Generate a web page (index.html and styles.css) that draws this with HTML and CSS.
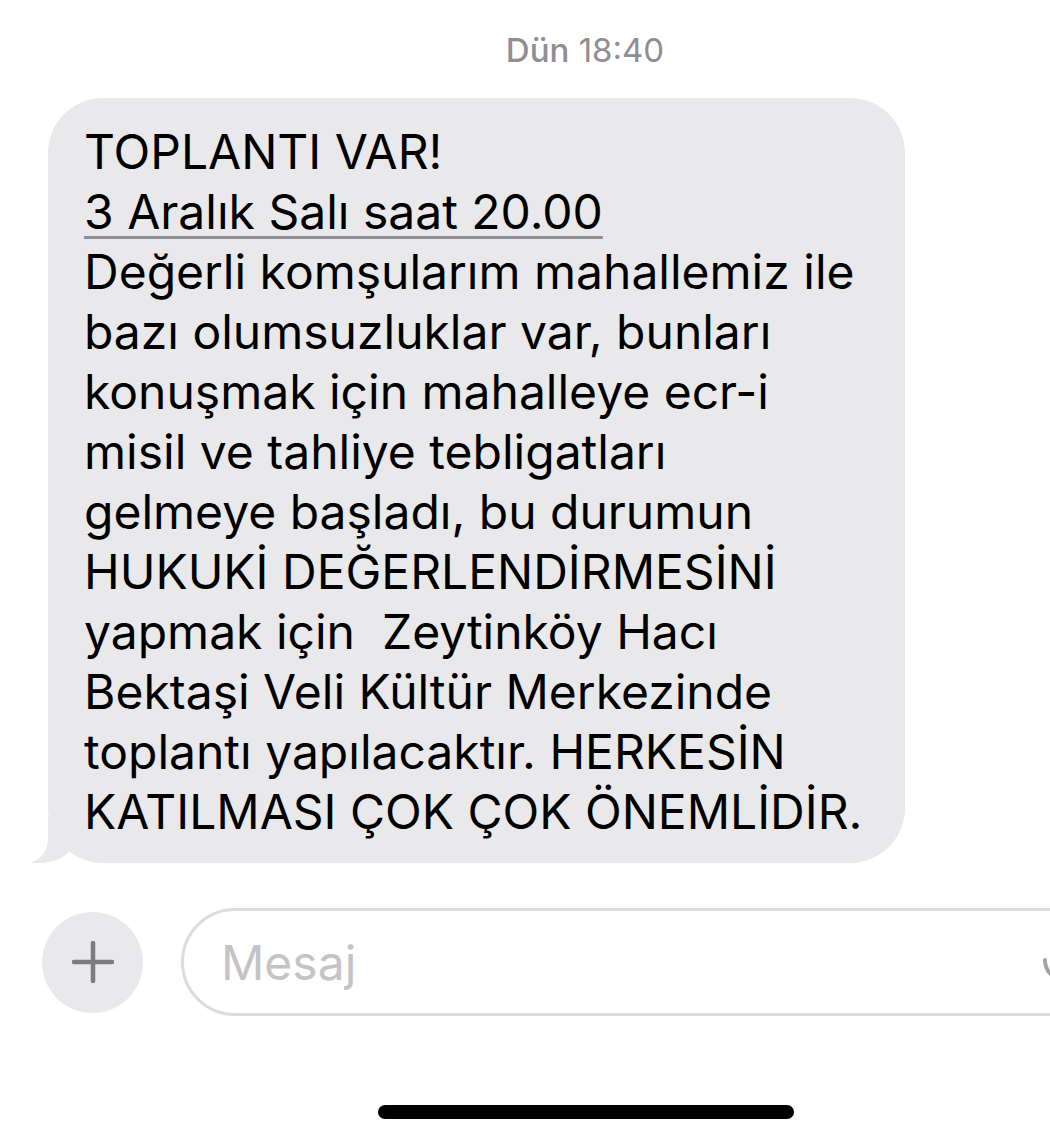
FILE: index.html
```html
<!DOCTYPE html>
<html lang="tr">
<head>
<meta charset="utf-8">
<title>Mesajlar</title>
<link rel="stylesheet" href="styles.css">
</head>
<body>
<div class="screen">
  <div class="time"><b>Dün</b> 18:40</div>
  <div class="bubble">
    <div class="msg">TOPLANTI VAR!<br><span class="link">3 Aralık Salı saat 20.00</span><br>Değerli komşularım mahallemiz ile<br>bazı olumsuzluklar var, bunları<br>konuşmak için mahalleye ecr-i<br>misil ve tahliye tebligatları<br>gelmeye başladı, bu durumun<br>HUKUKİ DEĞERLENDİRMESİNİ<br>yapmak için&nbsp; Zeytinköy Hacı<br>Bektaşi Veli Kültür Merkezinde<br>toplantı yapılacaktır. HERKESİN<br>KATILMASI ÇOK ÇOK ÖNEMLİDİR.</div>
  </div>
  <div class="composer">
    <div class="plus">
      <svg width="42" height="42" viewBox="0 0 42 42"><path d="M21 2v38M2 21h38" stroke="#7b7b80" stroke-width="4.5" stroke-linecap="round" fill="none"/></svg>
    </div>
    <div class="input">
      <span class="placeholder">Mesaj</span>
      <svg class="mic" width="44" height="56" viewBox="0 0 44 56"><rect x="13" y="2" width="18" height="32" rx="9" fill="none" stroke="#a2a2a7" stroke-width="4"/><path d="M4 22c0 11 8 19 18 19s18-8 18-19M22 41v11" fill="none" stroke="#a2a2a7" stroke-width="4" stroke-linecap="round"/></svg>
    </div>
  </div>
  <div class="home"></div>
</div>
</body>
</html>
```
FILE: styles.css
```css
html, body {
  margin: 0;
  padding: 0;
  background: #ffffff;
  overflow: hidden;
}
.screen {
  width: 1170px;
  height: 1143px;
  display: flex;
  flex-direction: column;
  font-family: "Inter", "Noto Sans", sans-serif;
  overflow: hidden;
}
.time {
  padding-top: 30px;
  height: 40px;
  line-height: 40px;
  text-align: center;
  font-size: 33px;
  color: #8e8e93;
  font-weight: 400;
}
.time b {
  font-weight: 500;
}
.bubble {
  position: relative;
  margin-top: 28px;
  margin-left: 48px;
  width: 857px;
  box-sizing: border-box;
  padding: 24px 0 21px 36px;
  background: #e9e9eb;
  border-radius: 55px;
}
.bubble::before {
  content: "";
  position: absolute;
  bottom: 0;
  left: -16px;
  width: 46px;
  height: 46px;
  background: #e9e9eb;
  border-bottom-right-radius: 37px 32px;
}
.bubble::after {
  content: "";
  position: absolute;
  bottom: 0;
  left: -60px;
  width: 60px;
  height: 46px;
  background: #ffffff;
  border-bottom-right-radius: 23px;
}
.msg {
  position: relative;
  z-index: 1;
  font-size: 48px;
  line-height: 60px;
  color: #000;
  white-space: nowrap;
}
.link {
  text-decoration: underline;
  text-decoration-color: #8e8e93;
  text-decoration-thickness: 3px;
  text-underline-offset: 7px;
}
.composer {
  margin-top: 45px;
  height: 108px;
  display: flex;
  align-items: center;
  gap: 38px;
  padding-left: 42px;
}
.plus {
  width: 101px;
  height: 101px;
  border-radius: 50%;
  background: #e9e9eb;
  display: flex;
  align-items: center;
  justify-content: center;
  flex: none;
}
.input {
  flex: none;
  width: 949px;
  height: 108px;
  box-sizing: border-box;
  border: 3px solid #dcdcde;
  border-radius: 54px;
  display: flex;
  align-items: center;
  padding-left: 37px;
  padding-right: 42px;
  justify-content: space-between;
}
.placeholder {
  font-size: 48px;
  color: #c4c4c7;
}
.mic {
  display: block;
  margin-top: 8px;
}
.home {
  margin-top: 89px;
  margin-left: 378px;
  width: 416px;
  height: 14px;
  border-radius: 7px;
  background: #000;
}
```
